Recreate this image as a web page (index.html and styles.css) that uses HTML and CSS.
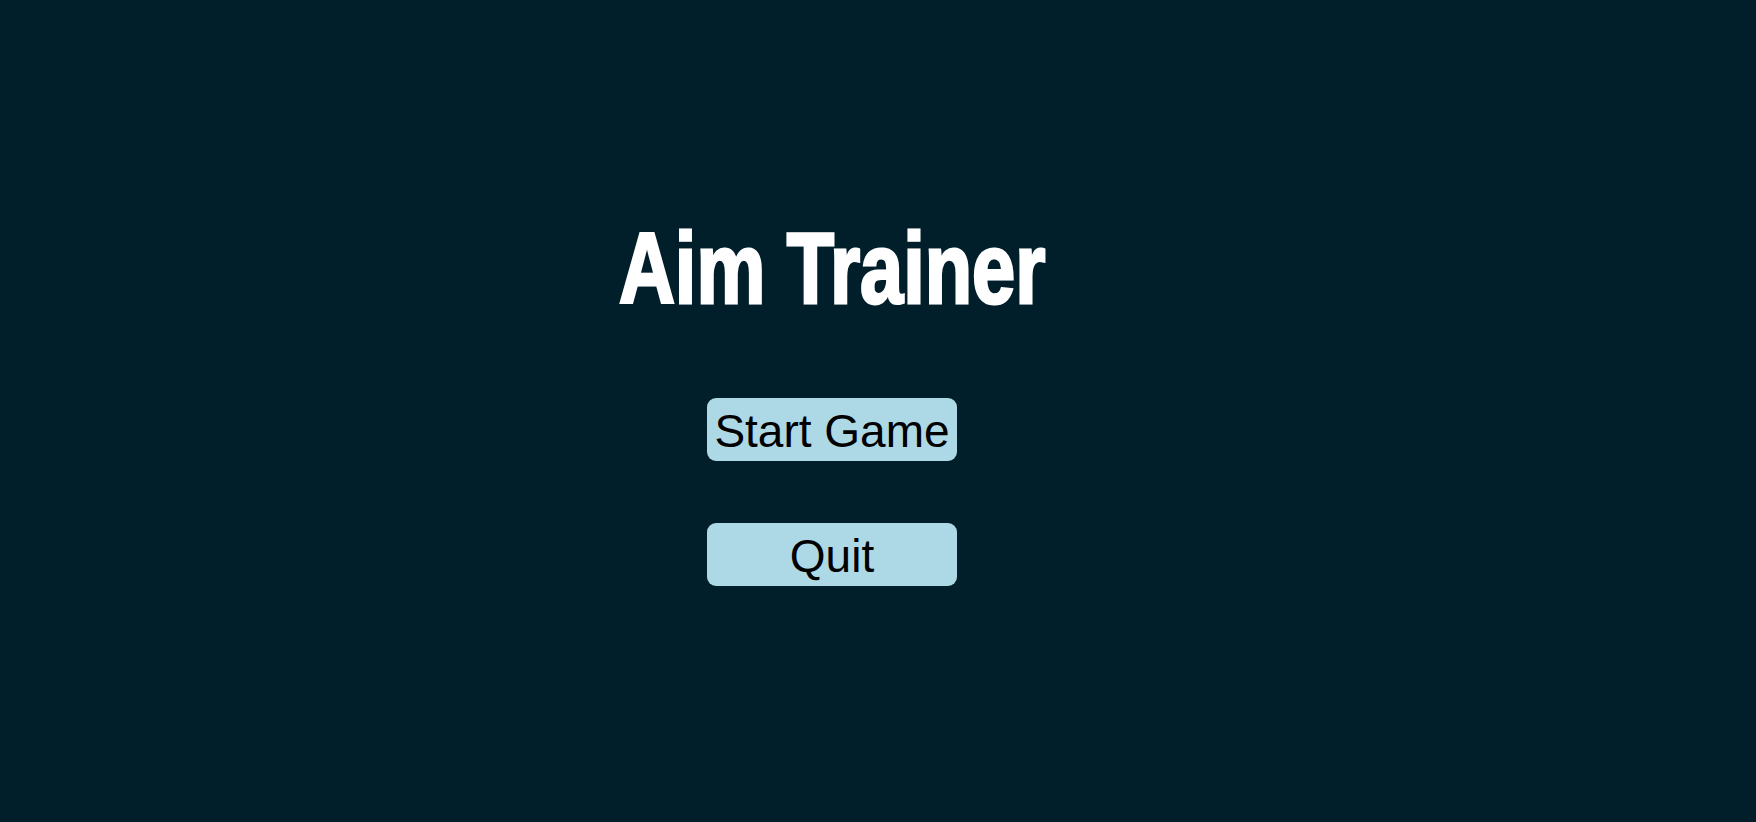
FILE: index.html
```html
<!DOCTYPE html>
<html lang="en">
<head>
<meta charset="utf-8">
<title>Aim Trainer</title>
<link rel="stylesheet" href="styles.css">
</head>
<body>
<main class="menu">
  <h1 class="title">Aim Trainer</h1>
  <div class="buttons">
    <button class="btn">Start Game</button>
    <button class="btn">Quit</button>
  </div>
</main>
</body>
</html>
```
FILE: styles.css
```css
html, body {
  margin: 0;
  padding: 0;
  height: 100%;
  background: #001f2b;
}
.menu {
  display: flex;
  flex-direction: column;
  align-items: center;
  padding-top: 218px;
  padding-right: 92px;
}
.title {
  margin: 0;
  font-family: "Liberation Sans", sans-serif;
  font-weight: 700;
  font-size: 100px;
  line-height: 1;
  color: #ffffff;
  -webkit-text-stroke: 3px #ffffff;
  transform: scaleX(0.775);
  transform-origin: center;
  white-space: nowrap;
}
.buttons {
  display: flex;
  flex-direction: column;
  gap: 62px;
  margin-top: 80px;
}
.btn {
  width: 250px;
  height: 63px;
  padding: 4px 0 0 0;
  border: none;
  border-radius: 9px;
  background: #add8e6;
  color: #000000;
  font-family: "Liberation Sans", sans-serif;
  font-size: 46px;
  line-height: 59px;
  white-space: nowrap;
  overflow: visible;
}
```
